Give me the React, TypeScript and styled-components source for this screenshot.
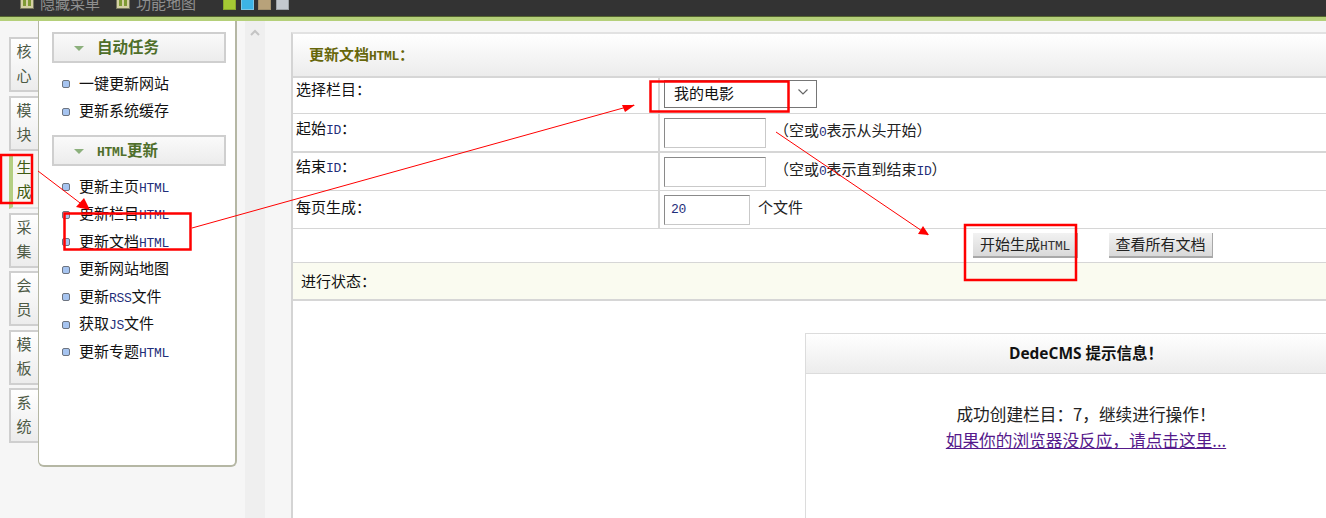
import React from "react";
import styled, { createGlobalStyle } from "styled-components";

const CJK = `"Noto Sans CJK SC", "Liberation Sans", sans-serif`;

const GlobalStyle = createGlobalStyle`
  html, body {
    margin: 0;
    padding: 0;
    height: 518px;
    overflow: hidden;
    background: #f6f6f6;
    font-family: ${CJK};
  }
  * { box-sizing: border-box; }
`;

const Page = styled.div`
  position: relative;
  width: 1326px;
  height: 518px;
  overflow: hidden;
`;

const TopBar = styled.div`
  display: flex;
  align-items: flex-start;
  height: 21px;
  padding-left: 20px;
  overflow: hidden;
  background: #333;
  border-bottom: 4px solid #b5d07a;
  box-shadow: inset 0 -1px 0 #54652f;
`;

const TopLink = styled.div`
  display: flex;
  align-items: center;
  gap: 6px;
  width: 96px;
  height: 18px;
  margin-top: -6px;
  font-size: 15px;
  line-height: 18px;
  color: #8f8f8f;
  white-space: nowrap;
`;

const TopIcon = styled.span`
  display: flex;
  gap: 2px;
  width: 14px;
  height: 14px;
  margin-top: -2px;
  padding: 2px;
  background: #d4d0a4;
  border: 1px solid #77775f;
`;

const TopIconPane = styled.span`
  flex: 1;
  background: #7f9a35;
`;

const Swatches = styled.div`
  display: flex;
  gap: 4.5px;
  margin-left: 11px;
`;

const Swatch = styled.span<{ $color: string; $edge: string }>`
  width: 13px;
  height: 10px;
  background: ${p => p.$color};
  border: 1px solid ${p => p.$edge};
  border-top: 0;
`;

const Body = styled.div`
  display: flex;
  height: 497px;
`;

const TabColumn = styled.div`
  display: flex;
  flex-direction: column;
  gap: 3.5px;
  width: 38px;
  padding: 16px 0 0 9px;
`;

const Tab = styled.div<{ $active?: boolean }>`
  display: flex;
  flex-direction: column;
  align-items: center;
  justify-content: center;
  height: 55px;
  padding-bottom: 3px;
  padding-right: ${p => (p.$active ? "3px" : "1px")};
  font-size: 15px;
  line-height: 24px;
  color: ${p => (p.$active ? "#3f5a10" : "#4d5a45")};
  background: ${p =>
    p.$active ? "#f7f7f3" : "linear-gradient(#fff, #ececec)"};
  border: 2px solid #cfcfcf;
  border-right: 0;
  border-left: ${p => (p.$active ? "4px solid #b4cf82" : "2px solid #cfcfcf")};
  ${p => (p.$active ? "border-top: 0; border-bottom: 2px solid #e2e2e2;" : "")}
`;

const TabChar = styled.span`
  display: block;
  height: 24px;
`;

const Sidebar = styled.div`
  width: 199px;
  height: 446px;
  padding: 11px 9px 0 13px;
  background: #fff;
  border: 1px solid #b5b7a4;
  border-width: 0 2px 2px 1px;
  border-radius: 0 0 6px 6px;
`;

const GroupTitle = styled.div`
  display: flex;
  align-items: center;
  gap: 13px;
  height: 31px;
  padding: 0 0 3px 20px;
  background: linear-gradient(#fafafa, #ececec);
  border: 2px solid #cfcfcf;
  color: #4f6f2a;
  font-size: 15.5px;
  font-weight: 700;
`;

const Caret = styled.span`
  width: 0;
  height: 0;
  margin-top: 5px;
  border-style: solid;
  border-width: 5px 5px 0 5px;
  border-color: #8cb07c transparent transparent transparent;
`;

const Menu = styled.ul<{ $tall?: boolean }>`
  list-style: none;
  margin: 0;
  padding: ${p => (p.$tall ? "7px 0 0 10px" : "7px 0 10px 10px")};
`;

const MenuItem = styled.li`
  display: flex;
  align-items: center;
  gap: 9px;
  height: 27.5px;
  padding-bottom: 3px;
  font-size: 15px;
  color: #111;
  white-space: nowrap;
`;

const Bullet = styled.span`
  width: 8px;
  height: 8px;
  margin-top: 4px;
  background: #a6c4f0;
  border: 1px solid #6d7480;
  border-radius: 2px;
`;

const Latin = styled.span<{ $color?: string }>`
  font-family: "Liberation Mono", monospace;
  font-size: 13px;
  letter-spacing: -0.3px;
  color: ${p => p.$color || "#1f2f7a"};
`;

const Splitter = styled.div`
  display: flex;
  justify-content: center;
  width: 20px;
  margin-left: 8px;
  padding-top: 8px;
  background: #efefef;
`;

const Main = styled.div`
  flex: 1;
  margin: 11px 0 0 26px;
  background: #fff;
  border-left: 2px solid #d4d4d4;
  border-top: 2px solid #e2e2e2;
  min-width: 0;
`;

const PanelHead = styled.div`
  display: flex;
  align-items: center;
  height: 44px;
  padding: 0 0 3px 16px;
  background: linear-gradient(#fff, #ececec);
  border-bottom: 2px solid #d6d6d6;
  font-size: 15px;
  font-weight: 700;
  color: #66660a;
`;

const Row = styled.div<{ $h: number; $thick?: boolean }>`
  display: grid;
  grid-template-columns: 367px 1fr;
  height: ${p => p.$h}px;
  border-bottom: ${p => (p.$thick ? 2 : 1)}px solid #d6d6d6;
`;

const Label = styled.div<{ $top: number }>`
  padding: ${p => p.$top}px 0 0 3px;
  font-size: 15px;
  line-height: 22px;
  color: #111;
  border-right: 2px solid #d6d6d6;
`;

const Field = styled.div`
  display: flex;
  align-items: center;
  gap: 8px;
  padding-left: 4px;
  font-size: 15px;
  color: #222;
`;

const Note = styled.span`
  padding-bottom: 6px;
`;

const SelectBox = styled.div`
  display: flex;
  align-items: center;
  justify-content: space-between;
  width: 153px;
  height: 28px;
  margin-bottom: 4px;
  padding: 0 7px 3px 9px;
  background: #fff;
  border: 1px solid #767676;
  font-size: 15px;
  color: #111;
`;

const TextBox = styled.div<{ $w: number }>`
  display: flex;
  align-items: center;
  width: ${p => p.$w}px;
  height: 30px;
  padding-left: 6px;
  background: #fff;
  border: 1px solid #c9c9c9;
  border-top-color: #8a8a8a;
  border-left-color: #8a8a8a;
`;

const ButtonRow = styled.div`
  display: flex;
  gap: 31px;
  height: 34px;
  padding: 4px 0 0 680px;
  border-bottom: 1px solid #d6d6d6;
`;

const Button = styled.button<{ $w: number }>`
  width: ${p => p.$w}px;
  height: 25px;
  padding: 0 0 4px;
  font-family: ${CJK};
  font-size: 15px;
  color: #222;
  background: linear-gradient(#f2f2f2, #d9d9d9);
  border: 0;
  border-right: 1px solid #a8a8a8;
  border-bottom: 2px solid #a8a8a8;
  white-space: nowrap;
`;

const Status = styled.div`
  display: flex;
  align-items: center;
  height: 38px;
  padding: 0 0 2px 8px;
  background: #fafbf0;
  border-bottom: 2px solid #d6d6d6;
  font-size: 15px;
  color: #111;
`;

const MessageBox = styled.div`
  width: 562px;
  height: 300px;
  margin: 32px 0 0 512px;
  background: #fff;
  border: 1px solid #dcdcdc;
`;

const MessageHead = styled.div`
  display: flex;
  align-items: center;
  justify-content: center;
  height: 40px;
  padding-bottom: 2px;
  background: linear-gradient(#fff, #ececec);
  border-bottom: 1px solid #dcdcdc;
  font-family: "Open Sans", ${CJK};
  font-size: 15.5px;
  font-weight: 700;
  color: #111;
`;

const MessageBody = styled.div`
  padding-top: 27px;
  text-align: center;
  font-size: 16.67px;
  line-height: 26px;
  color: #222;
`;

const MessageLink = styled.a`
  display: block;
  color: #551a8b;
  text-decoration: underline;
`;

const Overlay = styled.svg`
  position: absolute;
  left: 0;
  top: 0;
  pointer-events: none;
`;

const tabs = ["核心", "模块", "生成", "采集", "会员", "模板", "系统"];

type Seg = string | { latin: string };

const autoItems: Seg[][] = [["一键更新网站"], ["更新系统缓存"]];
const htmlItems: Seg[][] = [
  ["更新主页", { latin: "HTML" }],
  ["更新栏目", { latin: "HTML" }],
  ["更新文档", { latin: "HTML" }],
  ["更新网站地图"],
  ["更新", { latin: "RSS" }, "文件"],
  ["获取", { latin: "JS" }, "文件"],
  ["更新专题", { latin: "HTML" }],
];

const renderSegs = (segs: Seg[]) =>
  segs.map((s, i) =>
    typeof s === "string" ? s : <Latin key={i}>{s.latin}</Latin>
  );

const boxes = [
  [1, 155, 31, 48],
  [64.5, 213.5, 126, 36],
  [650.5, 81.5, 138, 30],
  [965, 225, 111, 55],
];

const arrows = [
  { x1: 38, y1: 171, x2: 88, y2: 209, head: "76,207 84,198 90,210" },
  { x1: 192, y1: 228, x2: 634, y2: 105, head: "622,105 635,105 625,112" },
  { x1: 776, y1: 132, x2: 928, y2: 235, head: "918,234 923,226 929,235" },
];

export default function App() {
  return (
    <Page>
      <GlobalStyle />
      <TopBar>
        <TopLink>
          <TopIcon>
            <TopIconPane />
            <TopIconPane />
          </TopIcon>
          隐藏菜单
        </TopLink>
        <TopLink>
          <TopIcon>
            <TopIconPane />
            <TopIconPane />
          </TopIcon>
          功能地图
        </TopLink>
        <Swatches>
          <Swatch $color="#a5c934" $edge="#8aa82c" />
          <Swatch $color="#3db4e6" $edge="#7cc7e6" />
          <Swatch $color="#b8a27a" $edge="#a3916e" />
          <Swatch $color="#c4c9cf" $edge="#9ea3a8" />
        </Swatches>
      </TopBar>
      <Body>
        <TabColumn>
          {tabs.map(t => (
            <Tab key={t} $active={t === "生成"}>
              <TabChar>{t[0]}</TabChar>
              <TabChar>{t[1]}</TabChar>
            </Tab>
          ))}
        </TabColumn>
        <Sidebar>
          <GroupTitle>
            <Caret />
            自动任务
          </GroupTitle>
          <Menu>
            {autoItems.map((segs, i) => (
              <MenuItem key={i}>
                <Bullet />
                <span>{renderSegs(segs)}</span>
              </MenuItem>
            ))}
          </Menu>
          <GroupTitle>
            <Caret />
            <span>
              <Latin $color="#4f6f2a">HTML</Latin>更新
            </span>
          </GroupTitle>
          <Menu $tall>
            {htmlItems.map((segs, i) => (
              <MenuItem key={i}>
                <Bullet />
                <span>{renderSegs(segs)}</span>
              </MenuItem>
            ))}
          </Menu>
        </Sidebar>
        <Splitter>
          <svg width="10" height="7" viewBox="0 0 10 7">
            <path d="M1 6 L5 2 L9 6" fill="none" stroke="#c4c4c4" strokeWidth="2" />
          </svg>
        </Splitter>
        <Main>
          <PanelHead>
            <span>
              更新文档<Latin $color="#66660a">HTML</Latin>：
            </span>
          </PanelHead>
          <Row $h={36}>
            <Label $top={0}>选择栏目：</Label>
            <Field>
              <SelectBox>
                我的电影
                <svg width="12" height="8" viewBox="0 0 12 8">
                  <path d="M1.5 1.5 L6 6 L10.5 1.5" fill="none" stroke="#666" strokeWidth="1.2" />
                </svg>
              </SelectBox>
            </Field>
          </Row>
          <Row $h={39} $thick>
            <Label $top={3}>
              起始<Latin>ID</Latin>：
            </Label>
            <Field>
              <TextBox $w={102} />
              <Note>
                （空或<Latin>0</Latin>表示从头开始）
              </Note>
            </Field>
          </Row>
          <Row $h={38}>
            <Label $top={2}>
              结束<Latin>ID</Latin>：
            </Label>
            <Field>
              <TextBox $w={102} />
              <Note>
                （空或<Latin>0</Latin>表示直到结束<Latin>ID</Latin>）
              </Note>
            </Field>
          </Row>
          <Row $h={38}>
            <Label $top={5}>每页生成：</Label>
            <Field>
              <TextBox $w={86}>
                <Latin>20</Latin>
              </TextBox>
              <Note>个文件</Note>
            </Field>
          </Row>
          <ButtonRow>
            <Button $w={105}>
              开始生成<Latin $color="#333">HTML</Latin>
            </Button>
            <Button $w={104}>查看所有文档</Button>
          </ButtonRow>
          <Status>进行状态：</Status>
          <MessageBox>
            <MessageHead>DedeCMS 提示信息！</MessageHead>
            <MessageBody>
              成功创建栏目：7，继续进行操作！
              <MessageLink>如果你的浏览器没反应，请点击这里...</MessageLink>
            </MessageBody>
          </MessageBox>
        </Main>
      </Body>
      <Overlay width="1326" height="518" viewBox="0 0 1326 518">
        {boxes.map(([x, y, w, h], i) => (
          <rect key={i} x={x} y={y} width={w} height={h} fill="none" stroke="#f00" strokeWidth="2.5" />
        ))}
        {arrows.map((a, i) => (
          <g key={i}>
            <line x1={a.x1} y1={a.y1} x2={a.x2} y2={a.y2} stroke="#f00" strokeWidth="1" />
            <polygon points={a.head} fill="#f00" />
          </g>
        ))}
      </Overlay>
    </Page>
  );
}
